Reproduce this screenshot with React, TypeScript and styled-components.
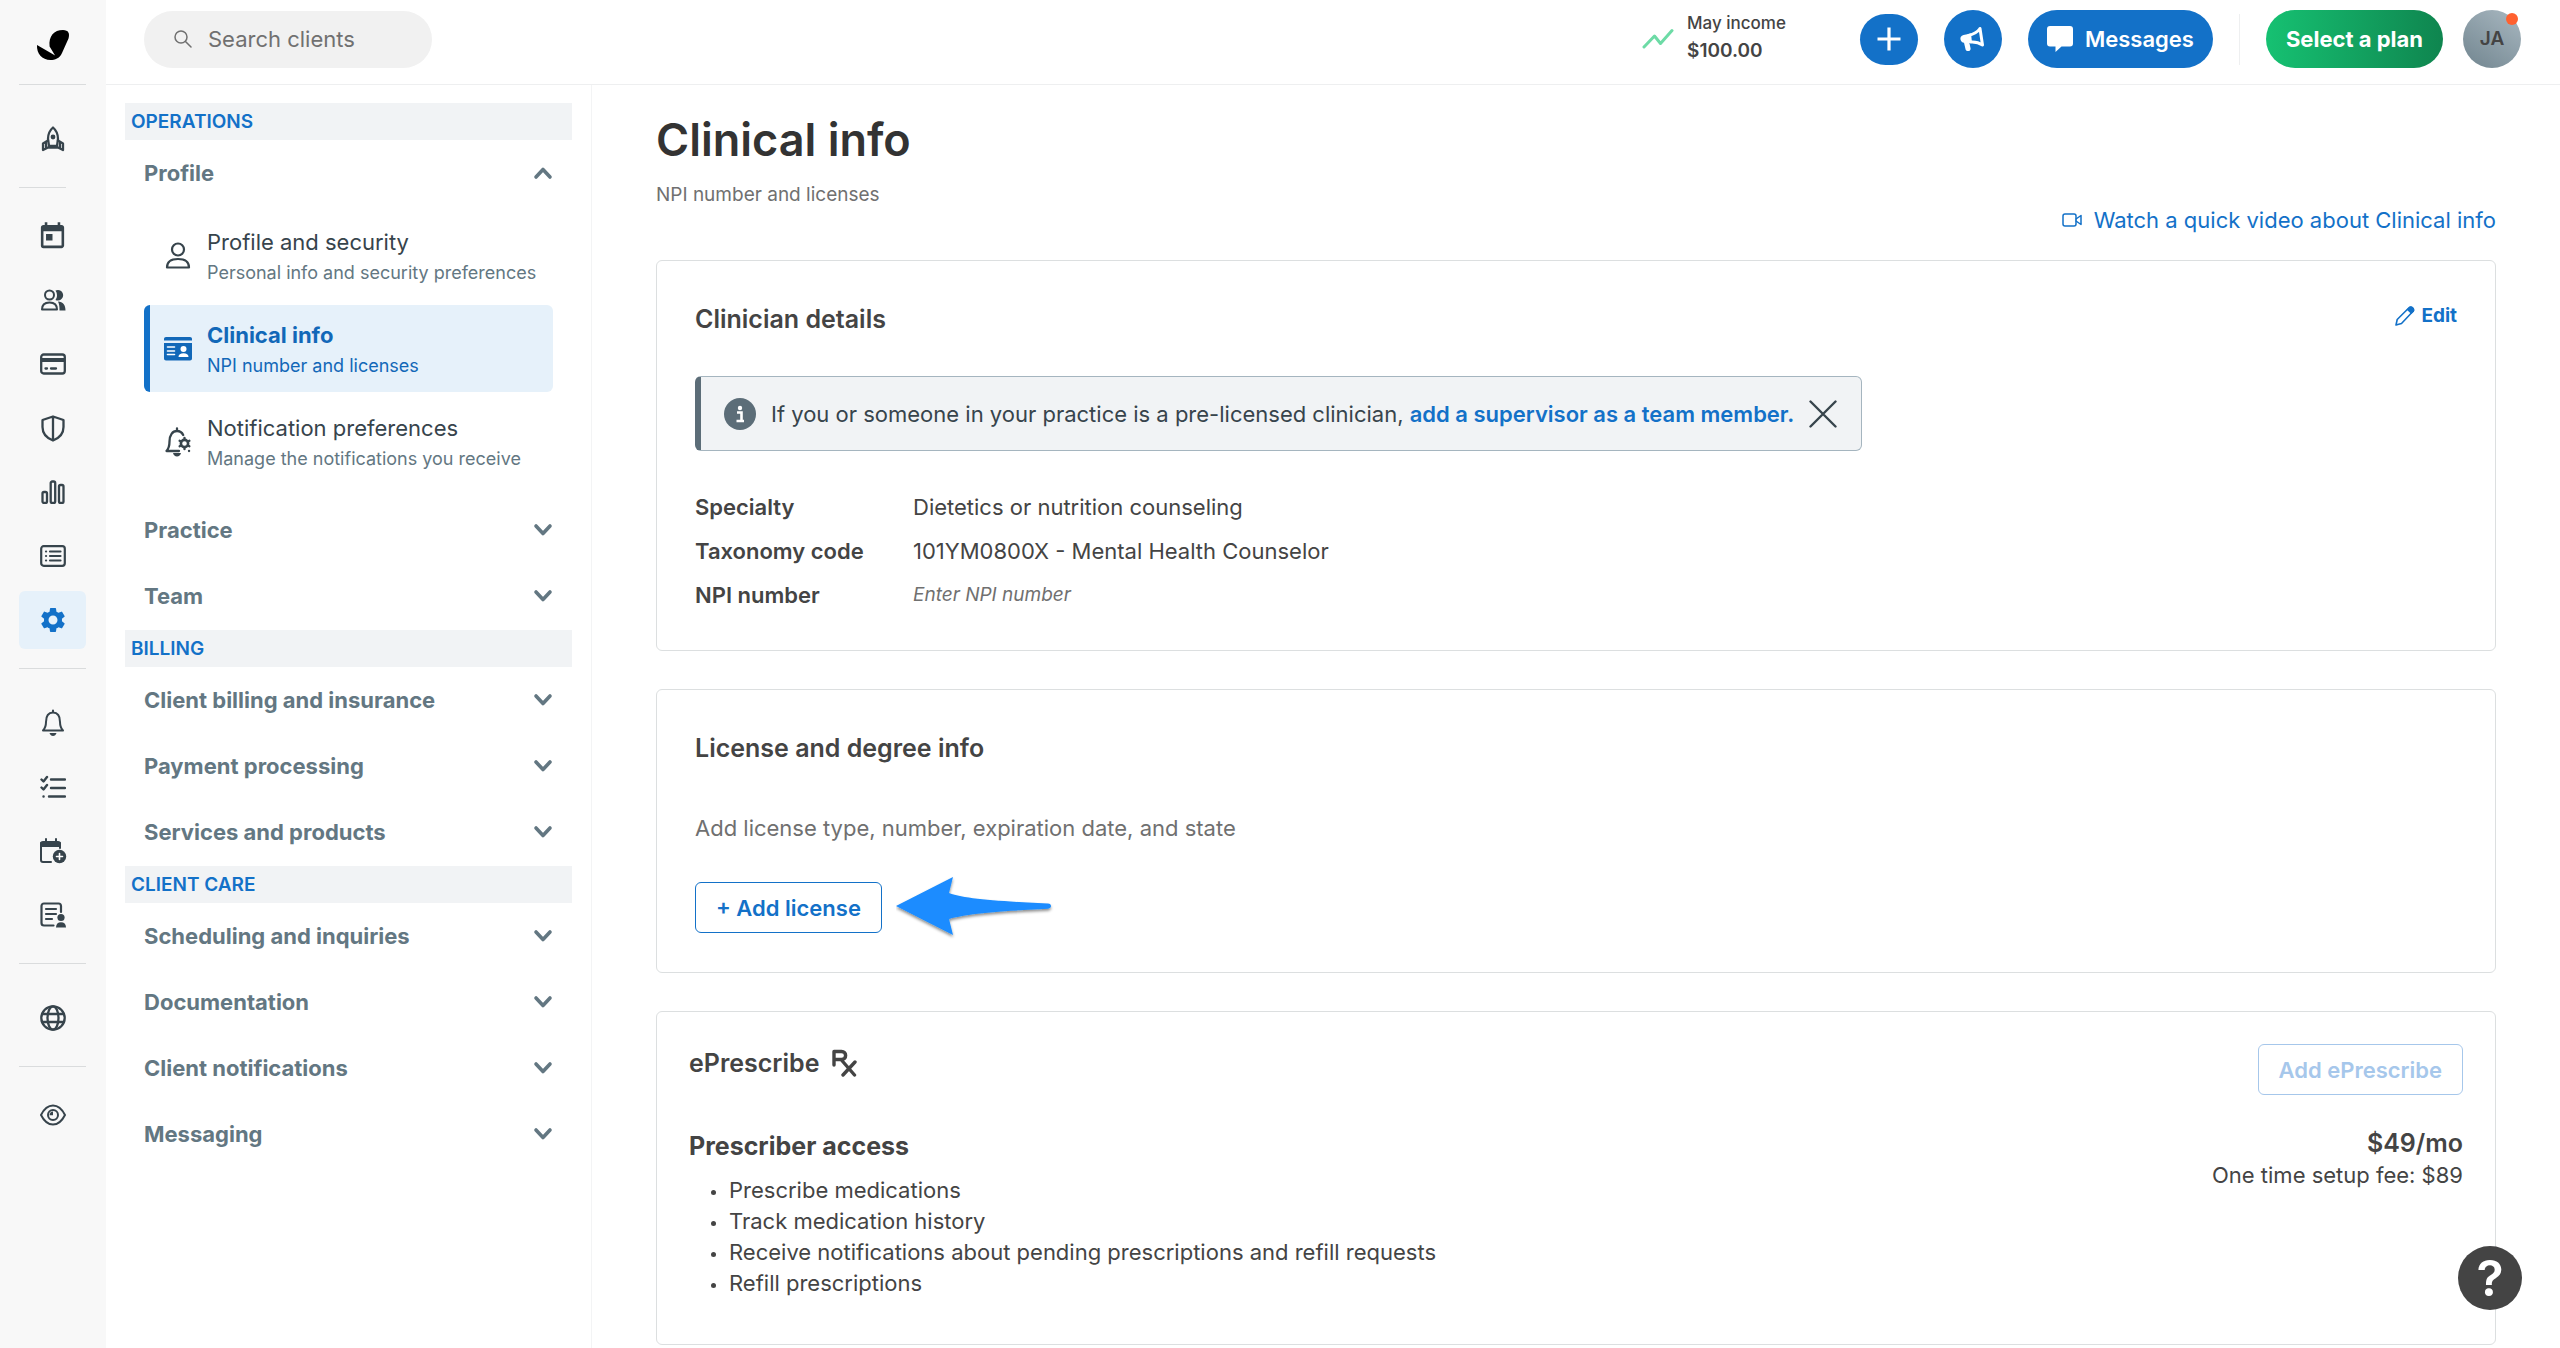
import React, { ReactNode } from "react";
import styled, { createGlobalStyle } from "styled-components";
import { MdSettings, MdToday } from "react-icons/md";

const c = {
  blue: "#1371c8",
  blueDark: "#1268b8",
  ink: "#37444c",
  slate: "#637782",
  text: "#444444",
  heading: "#333333",
  muted: "#707070",
  line: "#dcdfe0",
  pale: "#f1f3f5",
  active: "#e6f1fa",
};

const Global = createGlobalStyle`
  *, *::before, *::after { box-sizing: border-box; }
  body { margin: 0; background: #fff; color: ${c.text}; font-family: Inter, "Liberation Sans", sans-serif; font-size: 22px; line-height: 32px; }
  h1, h2, h3, p, ul, dl, dd { margin: 0; padding: 0; }
  ul { list-style: none; }
  button, input { font: inherit; }
  button { cursor: pointer; }
  a { text-decoration: none; }
  svg { display: block; flex: none; }
`;

const Shell = styled.div`
  display: grid;
  grid-template-columns: 106px minmax(0, 1fr);
  height: 100vh;
`;
const Rail = styled.nav`
  display: flex;
  flex-direction: column;
  padding: 0 20px 0 19px;
  background: #f8f8f8;
`;
const Logo = styled.a`
  display: flex;
  align-items: center;
  justify-content: center;
  height: 84px;
  padding-bottom: 4px;
  padding-top: 10px;
`;
const RailGroup = styled.div<{ $lead?: number }>`
  display: flex;
  flex-direction: column;
  gap: 6px;
  padding: ${(p) => p.$lead ?? 25}px 0 19px;
`;
const RailRule = styled.hr<{ $short?: boolean }>`
  width: ${(p) => (p.$short ? "47px" : "100%")};
  height: 1px;
  margin: 0;
  border: 0;
  background: #dadcdd;
`;
const RailLink = styled.a<{ $active?: boolean }>`
  display: flex;
  align-items: center;
  justify-content: center;
  height: 58px;
  border-radius: 6px;
  color: ${(p) => (p.$active ? c.blue : c.ink)};
  background: ${(p) => (p.$active ? c.active : "transparent")};
`;
const Workspace = styled.div`
  display: flex;
  flex-direction: column;
  min-width: 0;
  min-height: 0;
`;
const TopBar = styled.header`
  display: flex;
  align-items: center;
  justify-content: space-between;
  flex: none;
  padding: 10px 39px 16px 38px;
  border-bottom: 1px solid #eeeff0;
`;
const Search = styled.label`
  display: flex;
  align-items: center;
  gap: 16px;
  width: 288px;
  height: 57px;
  padding: 0 28px 0 30px;
  border-radius: 29px;
  background: #f1f1f1;
  color: ${c.muted};
`;
const SearchInput = styled.input`
  flex: 1;
  min-width: 0;
  padding: 0;
  border: 0;
  outline: 0;
  background: transparent;
  &::placeholder { color: ${c.muted}; opacity: 1; }
`;
const Actions = styled.div`
  display: flex;
  align-items: center;
  gap: 26px;
`;
const Income = styled.div`
  display: flex;
  align-items: center;
  gap: 13px;
  margin-right: 48px;
`;
const IncomeText = styled.div`
  padding-bottom: 4px;
  font-size: 17px;
  font-weight: 500;
  line-height: 27px;
`;
const IncomeSum = styled.strong`
  display: block;
  font-size: 19px;
  font-weight: 600;
`;
const RoundButton = styled.button<{ $height: number }>`
  display: flex;
  align-items: center;
  justify-content: center;
  width: 58px;
  height: ${(p) => p.$height}px;
  padding: 0;
  border: 0;
  border-radius: 29px;
  background: ${c.blue};
  color: #fff;
`;
const Pill = styled.button<{ $green?: boolean }>`
  display: flex;
  align-items: center;
  gap: 12px;
  height: 58px;
  padding: 0 ${(p) => (p.$green ? 20 : 19)}px;
  border: 0;
  border-radius: 29px;
  background: ${(p) => (p.$green ? "linear-gradient(90deg, #16c172, #0f854f)" : c.blue)};
  color: #fff;
  font-weight: ${(p) => (p.$green ? 700 : 600)};
  white-space: nowrap;
`;
const BarRule = styled.span`
  width: 1px;
  height: 51px;
  background: #eeeff0;
`;
const Account = styled.div`
  display: flex;
  align-items: center;
  gap: 20px;
`;
const Avatar = styled.button`
  position: relative;
  width: 58px;
  height: 58px;
  padding: 0;
  border: 0;
  border-radius: 50%;
  background: linear-gradient(35deg, #71858f, #a9b8c1);
  color: ${c.text};
  font-size: 19px;
  font-weight: 600;
`;
const AvatarDot = styled.span`
  position: absolute;
  top: 3px;
  right: 3px;
  width: 12px;
  height: 12px;
  border-radius: 50%;
  background: #ff6130;
`;
const Body = styled.div`
  display: grid;
  grid-template-columns: 486px minmax(0, 1fr);
  flex: 1;
  min-height: 0;
`;
const Sidebar = styled.aside`
  padding: 18px 19px 0;
  border-right: 1px solid #f3f4f5;
  overflow: auto;
  scrollbar-width: none;
`;
const Section = styled.section`
  padding-bottom: 1px;
`;
const SectionTitle = styled.h2`
  padding: 0 6px;
  background: ${c.pale};
  color: ${c.blue};
  font-size: 19px;
  font-weight: 600;
  line-height: 37px;
`;
const GroupButton = styled.button`
  display: flex;
  align-items: center;
  justify-content: space-between;
  width: 100%;
  height: 66px;
  padding: 0 19px;
  border: 0;
  background: transparent;
  color: ${c.slate};
  font-weight: 700;
`;
const SubList = styled.ul`
  display: flex;
  flex-direction: column;
  gap: 6px;
  padding: 6px 19px 12px;
`;
const SubLink = styled.a<{ $active?: boolean }>`
  display: flex;
  align-items: center;
  gap: 15px;
  padding: 12px 0 12px 14px;
  border-left: 6px solid ${(p) => (p.$active ? c.blue : "transparent")};
  border-radius: 6px;
  background: ${(p) => (p.$active ? c.active : "transparent")};
  color: ${(p) => (p.$active ? c.blueDark : c.ink)};
  font-weight: ${(p) => (p.$active ? 700 : 400)};
  line-height: 28px;
  white-space: nowrap;
`;
const SubText = styled.span`
  padding-top: 4px;
`;
const SubNote = styled.span<{ $active?: boolean }>`
  display: block;
  margin-top: 3px;
  color: ${(p) => (p.$active ? c.blueDark : c.slate)};
  font-size: 18px;
  font-weight: 400;
`;
const Main = styled.main`
  padding: 28px 64px 64px;
  overflow: auto;
  scrollbar-width: none;
`;
const PageHead = styled.div`
  display: flex;
  align-items: flex-end;
  justify-content: space-between;
  margin-bottom: 24px;
`;
const PageTitles = styled.div`
  padding-bottom: 27px;
`;
const Title = styled.h1`
  color: ${c.heading};
  font-size: 45px;
  font-weight: 600;
  line-height: 54px;
`;
const Subtitle = styled.p`
  margin-top: 14px;
  color: ${c.muted};
  font-size: 19px;
  line-height: 28px;
`;
const IconLink = styled.a<{ $strong?: boolean }>`
  display: flex;
  align-items: center;
  gap: ${(p) => (p.$strong ? 6 : 12)}px;
  color: ${c.blue};
  font-size: ${(p) => (p.$strong ? 19 : 22)}px;
  font-weight: ${(p) => (p.$strong ? 700 : 400)};
`;
const Cards = styled.div`
  display: flex;
  flex-direction: column;
  gap: 38px;
`;
const Card = styled.section<{ $pad?: string }>`
  padding: ${(p) => p.$pad ?? "39px 38px"};
  border: 1px solid ${c.line};
  border-radius: 6px;
`;
const CardRow = styled.div<{ $gap?: number }>`
  display: flex;
  align-items: flex-start;
  justify-content: space-between;
  margin-bottom: ${(p) => p.$gap ?? 0}px;
`;
const CardTitle = styled.h2<{ $bold?: boolean }>`
  display: flex;
  align-items: center;
  gap: 12px;
  font-size: 25px;
  font-weight: ${(p) => (p.$bold ? 700 : 600)};
  line-height: 38px;
`;
const Notice = styled.div`
  display: flex;
  align-items: center;
  width: fit-content;
  height: 75px;
  padding: 0 24px 0 23px;
  border: 1px solid #a5b5bf;
  border-left: 6px solid #5c6d78;
  border-radius: 6px;
  background: ${c.pale};
  color: ${c.ink};
`;
const NoticeText = styled.p`
  margin: 0 15px;
`;
const StrongLink = styled.a`
  color: ${c.blue};
  font-weight: 600;
`;
const BareButton = styled.button`
  padding: 0;
  border: 0;
  background: transparent;
  color: ${c.ink};
`;
const Details = styled.dl`
  display: grid;
  grid-template-columns: 202px 1fr;
  gap: 12px 16px;
  margin-top: 40px;
`;
const Term = styled.dt`
  font-weight: 600;
`;
const Empty = styled.em`
  display: block;
  color: ${c.muted};
  font-size: 19px;
`;
const Hint = styled.p`
  margin: 45px 0 38px;
  color: ${c.muted};
`;
const ButtonRow = styled.div`
  display: flex;
  align-items: center;
  gap: 14px;
  height: 51px;
`;
const OutlineButton = styled.button`
  height: 51px;
  padding: 0 20px;
  border: 1px solid ${c.blue};
  border-radius: 6px;
  background: #fff;
  color: ${c.blue};
  font-weight: 600;
  &:disabled { border-color: #a6c7eb; color: #a6c7eb; cursor: default; }
`;
const Bullets = styled.ul`
  margin-top: 10px;
  line-height: 31px;
`;
const Bullet = styled.li`
  display: flex;
  align-items: center;
  gap: 13px;
  padding-left: 22px;
  &::before { content: ""; width: 5px; height: 5px; margin-top: 4px; border-radius: 50%; background: ${c.text}; }
`;
const Price = styled.div`
  text-align: right;
`;
const PriceSum = styled.strong`
  display: block;
  font-size: 25px;
  font-weight: 600;
`;
const Help = styled.button`
  position: fixed;
  right: 38px;
  bottom: 38px;
  width: 64px;
  height: 64px;
  padding: 0;
  border: 0;
  border-radius: 50%;
  background: ${c.text};
  color: #fff;
  font-size: 50px;
  font-weight: 600;
  line-height: 64px;
`;

type IconProps = { w?: number; h?: number; box?: string; sw?: number; children: ReactNode };
const Icon = ({ w = 26, h = 26, box, sw = 2, children }: IconProps) => (
  <svg width={w} height={h} viewBox={box ?? `0 0 ${w} ${h}`} fill="none" stroke="currentColor" strokeWidth={sw} strokeLinecap="round" strokeLinejoin="round" aria-hidden="true">
    {children}
  </svg>
);
const solid = { fill: "currentColor", stroke: "none" };

const LogoMark = () => (
  <Icon w={34} h={32}>
    <path {...solid} d="M20 28 13.600 17.500C12.500 7 18 1 27 1c5.500 0 7 3.500 5.500 8.500L26 24c-2.500 5.500-7 7-11.500 7C6 31 .5 24.500 1 16l19 11z" fill="#000" />
  </Icon>
);
const Rocket = () => (
  <Icon sw={2.300}>
    <path d="M13 1.500C9.500 4.500 8 8.500 8 13l1 7h8l1-7c0-4.500-1.500-8.500-5-11.500z" />
    <circle cx="13" cy="11" r="2.400" {...solid} />
    <path d="M8 14.500 3 17.500v6.500l5-2.500h10l5 2.500v-6.500l-5-3M6 17v5M20 17v5" />
  </Icon>
);
const People = () => (
  <Icon h={24}>
    <circle cx="9.500" cy="7" r="4.500" />
    <path d="M2 21.500c0-5 3-7 7.500-7s7.500 2 7.500 7z" />
    <path {...solid} d="M15.500 2.500a5.300 5.300 0 1 1 0 9.500c2-3 2-6.500 0-9.500zM18 13.500c5 .3 7.500 3.500 7.500 9H19.500c0-4-.2-6.500-1.500-9z" />
  </Icon>
);
const CardIcon = () => (
  <Icon h={22} sw={2.300}>
    <rect x="1.200" y="1.500" width="23.600" height="19" rx="2.500" />
    <path d="M2 7h22" strokeWidth="4" strokeLinecap="butt" />
    <path d="M5.500 15.500h1.500M11 15.500h5" />
  </Icon>
);
const Shield = () => (
  <Icon h={27} sw={2.300}>
    <path d="M13 1.500 2.500 5v7c0 6.500 4 11 10.500 13.500 6.500-2.500 10.500-7 10.500-13.500V5zM13 2v23" />
  </Icon>
);
const Bars = () => (
  <Icon h={24} sw={2.300}>
    <rect x="2.500" y="12" width="4.500" height="11" rx="1.500" />
    <rect x="10.700" y="1.500" width="4.500" height="21.500" rx="1.500" />
    <rect x="19" y="5" width="4.500" height="18" rx="1.500" />
  </Icon>
);
const ListCard = () => (
  <Icon h={22} sw={2.200}>
    <rect x="1.200" y="1.200" width="23.600" height="19.600" rx="2.500" />
    <path d="M6 6.500h.1M6 11h.1M6 15.500h.1M10 6.500h10.500M10 11h10.500M10 15.500h10.500" />
  </Icon>
);
const Bell = () => (
  <Icon h={28}>
    <path d="M13 1.500v1.500M3 21.500c2-2 3-4.500 3-8.500 0-6 2.500-9.500 7-9.500s7 3.500 7 9.500c0 4 1 6.500 3 8.500z" />
    <path {...solid} d="M9.500 24h7c-.5 2-2 3-3.500 3s-3-1-3.500-3z" />
  </Icon>
);
const Checks = () => (
  <Icon h={24} sw={2.400}>
    <path d="m1.500 4.500 2 2 3.500-4.500M1.500 12.500l2 2L7 10M3.500 21.500h.1M11 4.500h14M11 13h14M9 21.500h16" />
  </Icon>
);
const CalendarPlus = () => (
  <Icon w={28} h={26}>
    <path d="M7 1v3M17 1v3M12 24H4c-1 0-2-1-2-2V5h19v5" />
    <path {...solid} d="M1 9V6c0-2 1-3 3-3h15c2 0 3 1 3 3v3z" />
    <circle cx="20.500" cy="18.500" r="6.700" {...solid} />
    <path d="M20.500 15.500v6M17.500 18.500h6" stroke="#fff" strokeWidth="1.600" />
  </Icon>
);
const DocPerson = () => (
  <Icon sw={2.200}>
    <path d="M21 10V4c0-1.500-.8-2.500-2.500-2.500H4C2.500 1.500 1.500 2.500 1.500 4v17c0 1.500 1 2.500 2.500 2.500h9.500M6 7h10M6 12h10M6 17h6" />
    <circle cx="21" cy="15.500" r="3.600" {...solid} />
    <path {...solid} d="M16 25.500c0-3.500 2-5.200 5-5.200s5 1.700 5 5.200z" />
  </Icon>
);
const Globe = () => (
  <Icon sw={2.300}>
    <circle cx="13" cy="13" r="11.700" />
    <ellipse cx="13" cy="13" rx="5.500" ry="11.700" />
    <path d="M2 9h22M2 17h22" />
  </Icon>
);
const Eye = () => (
  <Icon h={22}>
    <path d="M1 11c3-6 7-9.500 12-9.500S22 5 25 11c-3 6-7 9.500-12 9.500S4 17 1 11z" />
    <circle cx="13" cy="11" r="5" />
    <path {...solid} d="M13 7.500v3.800H9.500c0-2.200 1.500-3.800 3.500-3.800z" />
  </Icon>
);
const Person = () => (
  <Icon w={28} h={27} sw={2.200}>
    <circle cx="14" cy="7.500" r="6" />
    <path d="M3 25.500c0-6 4-8.500 11-8.500s11 2.500 11 8.500z" />
  </Icon>
);
const IdCard = () => (
  <Icon w={28} h={24}>
    <path {...solid} d="M0 2C0 .8.800 0 2 0h24c1.200 0 2 .8 2 2v1.500H0z" />
    <path {...solid} d="M0 6h28v15.500c0 1.200-.8 2-2 2H2c-1.200 0-2-.8-2-2z" />
    <path d="M3.500 10h7M3.500 14h7M3.500 17.500h7" stroke="#fff" strokeWidth="1.600" />
    <circle cx="19.500" cy="12" r="3" fill="#fff" stroke="none" />
    <path d="M14.500 20c0-2.600 2-3.800 5-3.800s5 1.200 5 3.800z" fill="#fff" stroke="none" />
  </Icon>
);
const BellGear = () => (
  <Icon w={28} h={30} sw={2.300}>
    <path d="M13 1.500v2M15 24H2.500c2-2.200 3-5 3-9.500 0-6.500 3-10.500 7.500-10.500 3 0 5 1.500 6.200 4" />
    <path {...solid} d="M9 26h8c-.5 2.200-2 3.500-4 3.500S9.500 28.200 9 26z" />
    <circle cx="20.500" cy="16.500" r="3.600" strokeWidth="2.600" />
    <path d="M20.500 10.800v1M20.500 21.200v1M15.600 13.700l.9.500M24.500 18.800l.9.500M15.600 19.300l.9-.5M24.500 14.200l.9-.5" />
    <path d="M25 24h.1" />
  </Icon>
);
const Chevron = ({ up }: { up?: boolean }) => (
  <Icon w={20} h={14} sw={3.600}>
    <path d={up ? "M3 11 10 3.500l7 7.500" : "M3 3l7 7.500L17 3"} />
  </Icon>
);
const Close = () => (
  <Icon w={28} h={28} sw={2.400}>
    <path d="m1.500 1.500 25 25M26.500 1.500l-25 25" />
  </Icon>
);
const Rx = () => (
  <Icon w={26} h={28} sw={3.400}>
    <path d="M3 16V2.500h7.500c5.500 0 5.500 8 0 8H3M10 10.500l13.500 15.500M24 13 12 26" />
  </Icon>
);
const Pointer = () => (
  <svg width="160" height="64" viewBox="0 0 160 64" aria-hidden="true">
    <defs>
      <filter id="drop" x="-10%" y="-10%" width="120%" height="130%">
        <feDropShadow dx="0" dy="2" stdDeviation="1.500" floodColor="#000" floodOpacity=".45" />
      </filter>
    </defs>
    <path d="M0 30 57 1 53 17c16 6 48 8 99 10.500 4 .2 4 5 0 5.200C101 35 69 38 53 43l4 16z" fill="#1a8cff" filter="url(#drop)" />
  </svg>
);

const Group = ({ label, open, children }: { label: string; open?: boolean; children?: ReactNode }) => (
  <>
    <GroupButton type="button" aria-expanded={!!open}>
      {label}
      <Chevron up={open} />
    </GroupButton>
    {children}
  </>
);

const profileItems = [
  { icon: <Person />, title: "Profile and security", note: "Personal info and security preferences" },
  { icon: <IdCard />, title: "Clinical info", note: "NPI number and licenses", active: true },
  { icon: <BellGear />, title: "Notification preferences", note: "Manage the notifications you receive" },
];
const benefits = [
  "Prescribe medications",
  "Track medication history",
  "Receive notifications about pending prescriptions and refill requests",
  "Refill prescriptions",
];

export default function App() {
  return (
    <Shell>
      <Global />
      <Rail aria-label="Main">
        <Logo href="#" aria-label="Home"><LogoMark /></Logo>
        <RailRule />
        <RailGroup>
          <RailLink href="#" aria-label="Get started"><Rocket /></RailLink>
        </RailGroup>
        <RailRule $short />
        <RailGroup $lead={19}>
          <RailLink href="#" aria-label="Calendar"><MdToday size={31} /></RailLink>
          <RailLink href="#" aria-label="Clients"><People /></RailLink>
          <RailLink href="#" aria-label="Billing"><CardIcon /></RailLink>
          <RailLink href="#" aria-label="Insurance"><Shield /></RailLink>
          <RailLink href="#" aria-label="Analytics"><Bars /></RailLink>
          <RailLink href="#" aria-label="Activity"><ListCard /></RailLink>
          <RailLink href="#" aria-label="Settings" $active><MdSettings size={30} /></RailLink>
        </RailGroup>
        <RailRule />
        <RailGroup>
          <RailLink href="#" aria-label="Reminders"><Bell /></RailLink>
          <RailLink href="#" aria-label="Tasks"><Checks /></RailLink>
          <RailLink href="#" aria-label="Requests"><CalendarPlus /></RailLink>
          <RailLink href="#" aria-label="Supervision"><DocPerson /></RailLink>
        </RailGroup>
        <RailRule />
        <RailGroup>
          <RailLink href="#" aria-label="Website"><Globe /></RailLink>
        </RailGroup>
        <RailRule />
        <RailGroup $lead={19}>
          <RailLink href="#" aria-label="Preview"><Eye /></RailLink>
        </RailGroup>
      </Rail>

      <Workspace>
        <TopBar>
          <Search>
            <Icon w={18} h={18} sw={1.500}>
              <circle cx="7" cy="7" r="6" />
              <path d="m11.500 11.500 5.500 5.500" />
            </Icon>
            <SearchInput type="search" placeholder="Search clients" aria-label="Search clients" />
          </Search>
          <Actions>
            <Income>
              <svg width="32" height="22" viewBox="0 0 32 22" fill="none" stroke="#6ddba6" strokeWidth="3" strokeLinecap="round" strokeLinejoin="round" aria-hidden="true">
                <path d="M2 19 12.500 8l6 7.500L30 2.500" />
              </svg>
              <IncomeText>May income<IncomeSum>$100.00</IncomeSum></IncomeText>
            </Income>
            <RoundButton type="button" $height={51} aria-label="Create">
              <Icon w={24} h={24} sw={3.200}>
                <path d="M12 .5v23M.5 12h23" strokeLinecap="butt" />
              </Icon>
            </RoundButton>
            <RoundButton type="button" $height={58} aria-label="Announcements">
              <Icon w={28} h={28}>
                <path d="M21 3.500 23.500 20M21 3.500C18 8 13.500 9.500 9.500 10.500M23.500 20c-4-2.800-8-3.300-12-3" strokeWidth="3" />
                <path {...solid} d="M12 8.500 4.500 10C2 10.500 1 12.500 1.500 14.500c.4 2 1.700 3 3.500 3.200l1.600 6.800c.8 2.500 5.400 2 5-1l-1.200-5.500 2.600-.5z" />
              </Icon>
            </RoundButton>
            <Pill type="button">
              <Icon w={26} h={26}>
                <path {...solid} d="M3 0h20c2 0 3 1 3 3v14.500c0 2-1 3-3 3h-8.500L8.500 26v-5.500H3c-2 0-3-1-3-3V3c0-2 1-3 3-3z" />
              </Icon>
              Messages
            </Pill>
            <BarRule />
            <Account>
              <Pill type="button" $green>Select a plan</Pill>
              <Avatar type="button">JA<AvatarDot /></Avatar>
            </Account>
          </Actions>
        </TopBar>

        <Body>
          <Sidebar>
            <Section>
              <SectionTitle>OPERATIONS</SectionTitle>
              <Group label="Profile" open>
                <SubList>
                  {profileItems.map((it) => (
                    <li key={it.title}>
                      <SubLink href="#" $active={it.active}>
                        {it.icon}
                        <SubText>{it.title}<SubNote $active={it.active}>{it.note}</SubNote></SubText>
                      </SubLink>
                    </li>
                  ))}
                </SubList>
              </Group>
              <Group label="Practice" />
              <Group label="Team" />
            </Section>
            <Section>
              <SectionTitle>BILLING</SectionTitle>
              <Group label="Client billing and insurance" />
              <Group label="Payment processing" />
              <Group label="Services and products" />
            </Section>
            <Section>
              <SectionTitle>CLIENT CARE</SectionTitle>
              <Group label="Scheduling and inquiries" />
              <Group label="Documentation" />
              <Group label="Client notifications" />
              <Group label="Messaging" />
            </Section>
          </Sidebar>

          <Main>
            <PageHead>
              <PageTitles>
                <Title>Clinical info</Title>
                <Subtitle>NPI number and licenses</Subtitle>
              </PageTitles>
              <IconLink href="#">
                <Icon w={20} h={14} sw={1.500}>
                  <rect x="1" y="1" width="13" height="12" rx="2" />
                  <path d="m14 6 5-3.500v9L14 8" />
                </Icon>
                Watch a quick video about Clinical info
              </IconLink>
            </PageHead>

            <Cards>
              <Card>
                <CardRow $gap={38}>
                  <CardTitle>Clinician details</CardTitle>
                  <IconLink href="#" $strong>
                    <Icon w={20} h={20} sw={1.600}>
                      <path d="M1 19l1.200-5.500L14 1.700c1-1 2.500-.7 3.500.3s1.300 2.500.3 3.500L6.500 17.500z" />
                      <path {...solid} d="m11.500 3.500 2.800-2.500c3-1.500 6 1.500 4.700 4.500L16.300 8z" />
                    </Icon>
                    Edit
                  </IconLink>
                </CardRow>
                <Notice role="note">
                  <svg width="32" height="32" viewBox="0 0 32 32" aria-hidden="true">
                    <circle cx="16" cy="16" r="16" fill="#5c6d78" />
                    <circle cx="16" cy="10" r="2.200" fill="#fff" />
                    <path d="M13 14.500h4.500v8M12.500 23h7.500" stroke="#fff" strokeWidth="2.600" fill="none" />
                  </svg>
                  <NoticeText>
                    If you or someone in your practice is a pre-licensed clinician,{" "}
                    <StrongLink href="#">add a supervisor as a team member.</StrongLink>
                  </NoticeText>
                  <BareButton type="button" aria-label="Dismiss"><Close /></BareButton>
                </Notice>
                <Details>
                  <Term>Specialty</Term>
                  <dd>Dietetics or nutrition counseling</dd>
                  <Term>Taxonomy code</Term>
                  <dd>101YM0800X - Mental Health Counselor</dd>
                  <Term>NPI number</Term>
                  <dd><Empty>Enter NPI number</Empty></dd>
                </Details>
              </Card>

              <Card>
                <CardTitle>License and degree info</CardTitle>
                <Hint>Add license type, number, expiration date, and state</Hint>
                <ButtonRow>
                  <OutlineButton type="button">+ Add license</OutlineButton>
                  <Pointer />
                </ButtonRow>
              </Card>

              <Card $pad="32px 32px 45px">
                <CardRow $gap={32}>
                  <CardTitle>ePrescribe<Rx /></CardTitle>
                  <OutlineButton type="button" disabled>Add ePrescribe</OutlineButton>
                </CardRow>
                <CardRow>
                  <div>
                    <CardTitle as="h3" $bold>Prescriber access</CardTitle>
                    <Bullets>
                      {benefits.map((b) => <Bullet key={b}>{b}</Bullet>)}
                    </Bullets>
                  </div>
                  <Price><PriceSum>$49/mo</PriceSum>One time setup fee: $89</Price>
                </CardRow>
              </Card>
            </Cards>
          </Main>
        </Body>
      </Workspace>
      <Help type="button" aria-label="Help">?</Help>
    </Shell>
  );
}
